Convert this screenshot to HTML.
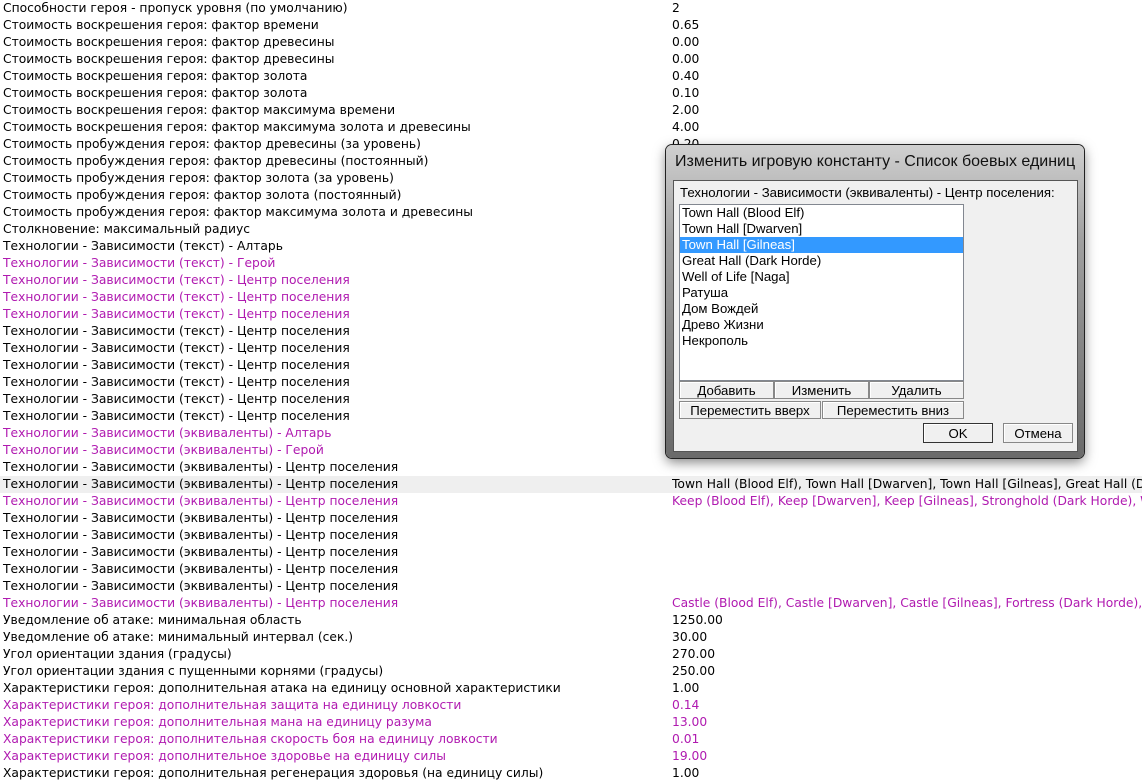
<!DOCTYPE html>
<html><head><meta charset="utf-8"><style>
body{margin:0;width:1142px;height:770px;overflow:hidden;background:#fff;font-family:Tahoma,"DejaVu Sans","Liberation Sans",sans-serif;font-size:12.3px;position:relative}
.r{position:absolute;left:0;width:1142px;height:17px;line-height:17px;white-space:nowrap;color:#000}
.r span{position:absolute;left:3px}
.r b{font-weight:normal;position:absolute;left:672px;width:470px;overflow:hidden;text-overflow:clip}
.p{color:#b01ab0}
.hl{background:#efefef}
#dlg{position:absolute;left:666px;top:145px;width:418px;height:313px;border-radius:6px;background:linear-gradient(#d0d0d0,#a0a0a0 30%,#6a6a6a);box-shadow:0 0 0 1px #222,0 4px 12px rgba(0,0,0,.5);font-family:"Liberation Sans","DejaVu Sans",sans-serif}
#dlg .t{position:absolute;left:9px;top:8px;font-size:16px;color:#111}
#in{position:absolute;left:7px;top:35px;width:403px;height:270px;background:#f0f0f0;border:1px solid #555}
.lab{position:absolute;left:6px;top:4px;font-size:13.2px;white-space:nowrap;width:398px;overflow:hidden}
#lb{position:absolute;left:5px;top:23px;width:283px;height:175px;background:#fff;border:1px solid #828790}
#lb div{height:16px;line-height:16px;padding-left:2px;font-size:13.2px}
#lb .s{background:#3399ff;color:#fff}
.btn{position:absolute;height:18px;line-height:18px;text-align:center;background:#f0f0f0;border:1px solid #888;box-shadow:inset 1px 1px #fff;font-size:13.2px;box-sizing:border-box}
</style></head><body>
<div class="r" style="top:0"><span>Способности героя - пропуск уровня (по умолчанию)</span><b>2</b></div>
<div class="r" style="top:17px"><span>Стоимость воскрешения героя: фактор времени</span><b>0.65</b></div>
<div class="r" style="top:34px"><span>Стоимость воскрешения героя: фактор древесины</span><b>0.00</b></div>
<div class="r" style="top:51px"><span>Стоимость воскрешения героя: фактор древесины</span><b>0.00</b></div>
<div class="r" style="top:68px"><span>Стоимость воскрешения героя: фактор золота</span><b>0.40</b></div>
<div class="r" style="top:85px"><span>Стоимость воскрешения героя: фактор золота</span><b>0.10</b></div>
<div class="r" style="top:102px"><span>Стоимость воскрешения героя: фактор максимума времени</span><b>2.00</b></div>
<div class="r" style="top:119px"><span>Стоимость воскрешения героя: фактор максимума золота и древесины</span><b>4.00</b></div>
<div class="r" style="top:136px"><span>Стоимость пробуждения героя: фактор древесины (за уровень)</span><b>0.20</b></div>
<div class="r" style="top:153px"><span>Стоимость пробуждения героя: фактор древесины (постоянный)</span></div>
<div class="r" style="top:170px"><span>Стоимость пробуждения героя: фактор золота (за уровень)</span></div>
<div class="r" style="top:187px"><span>Стоимость пробуждения героя: фактор золота (постоянный)</span></div>
<div class="r" style="top:204px"><span>Стоимость пробуждения героя: фактор максимума золота и древесины</span></div>
<div class="r" style="top:221px"><span>Столкновение: максимальный радиус</span></div>
<div class="r" style="top:238px"><span>Технологии - Зависимости (текст) - Алтарь</span></div>
<div class="r p" style="top:255px"><span>Технологии - Зависимости (текст) - Герой</span></div>
<div class="r p" style="top:272px"><span>Технологии - Зависимости (текст) - Центр поселения</span></div>
<div class="r p" style="top:289px"><span>Технологии - Зависимости (текст) - Центр поселения</span></div>
<div class="r p" style="top:306px"><span>Технологии - Зависимости (текст) - Центр поселения</span></div>
<div class="r" style="top:323px"><span>Технологии - Зависимости (текст) - Центр поселения</span></div>
<div class="r" style="top:340px"><span>Технологии - Зависимости (текст) - Центр поселения</span></div>
<div class="r" style="top:357px"><span>Технологии - Зависимости (текст) - Центр поселения</span></div>
<div class="r" style="top:374px"><span>Технологии - Зависимости (текст) - Центр поселения</span></div>
<div class="r" style="top:391px"><span>Технологии - Зависимости (текст) - Центр поселения</span></div>
<div class="r" style="top:408px"><span>Технологии - Зависимости (текст) - Центр поселения</span></div>
<div class="r p" style="top:425px"><span>Технологии - Зависимости (эквиваленты) - Алтарь</span><b>Altar (Blood Elf), Altar [Dwarven], Altar [Gilneas]..</b></div>
<div class="r p" style="top:442px"><span>Технологии - Зависимости (эквиваленты) - Герой</span><b>[Dwarven] [Naga], Hunter [Gilneas] [Naga], Weaver F...</b></div>
<div class="r" style="top:459px"><span>Технологии - Зависимости (эквиваленты) - Центр поселения</span></div>
<div class="r hl" style="top:476px"><span>Технологии - Зависимости (эквиваленты) - Центр поселения</span><b>Town Hall (Blood Elf), Town Hall [Dwarven], Town Hall [Gilneas], Great Hall (D...</b></div>
<div class="r p" style="top:493px"><span>Технологии - Зависимости (эквиваленты) - Центр поселения</span><b>Keep (Blood Elf), Keep [Dwarven], Keep [Gilneas], Stronghold (Dark Horde), W...</b></div>
<div class="r" style="top:510px"><span>Технологии - Зависимости (эквиваленты) - Центр поселения</span></div>
<div class="r" style="top:527px"><span>Технологии - Зависимости (эквиваленты) - Центр поселения</span></div>
<div class="r" style="top:544px"><span>Технологии - Зависимости (эквиваленты) - Центр поселения</span></div>
<div class="r" style="top:561px"><span>Технологии - Зависимости (эквиваленты) - Центр поселения</span></div>
<div class="r" style="top:578px"><span>Технологии - Зависимости (эквиваленты) - Центр поселения</span></div>
<div class="r p" style="top:595px"><span>Технологии - Зависимости (эквиваленты) - Центр поселения</span><b>Castle (Blood Elf), Castle [Dwarven], Castle [Gilneas], Fortress (Dark Horde), T...</b></div>
<div class="r" style="top:612px"><span>Уведомление об атаке: минимальная область</span><b>1250.00</b></div>
<div class="r" style="top:629px"><span>Уведомление об атаке: минимальный интервал (сек.)</span><b>30.00</b></div>
<div class="r" style="top:646px"><span>Угол ориентации здания (градусы)</span><b>270.00</b></div>
<div class="r" style="top:663px"><span>Угол ориентации здания с пущенными корнями (градусы)</span><b>250.00</b></div>
<div class="r" style="top:680px"><span>Характеристики героя: дополнительная атака на единицу основной характеристики</span><b>1.00</b></div>
<div class="r p" style="top:697px"><span>Характеристики героя: дополнительная защита на единицу ловкости</span><b>0.14</b></div>
<div class="r p" style="top:714px"><span>Характеристики героя: дополнительная мана на единицу разума</span><b>13.00</b></div>
<div class="r p" style="top:731px"><span>Характеристики героя: дополнительная скорость боя на единицу ловкости</span><b>0.01</b></div>
<div class="r p" style="top:748px"><span>Характеристики героя: дополнительное здоровье на единицу силы</span><b>19.00</b></div>
<div class="r" style="top:765px"><span>Характеристики героя: дополнительная регенерация здоровья (на единицу силы)</span><b>1.00</b></div>

<div id="dlg">
<div class="t">Изменить игровую константу - Список боевых единиц</div>
<div id="in">
<div class="lab">Технологии - Зависимости (эквиваленты) - Центр поселения:</div>
<div id="lb">
<div>Town Hall (Blood Elf)</div><div>Town Hall [Dwarven]</div><div class="s">Town Hall [Gilneas]</div><div>Great Hall (Dark Horde)</div><div>Well of Life [Naga]</div><div>Ратуша</div><div>Дом Вождей</div><div>Древо Жизни</div><div>Некрополь</div>
</div>
<div class="btn" style="left:5px;top:200px;width:95px">Добавить</div>
<div class="btn" style="left:100px;top:200px;width:95px">Изменить</div>
<div class="btn" style="left:195px;top:200px;width:95px">Удалить</div>
<div class="btn" style="left:5px;top:220px;width:142px">Переместить вверх</div>
<div class="btn" style="left:148px;top:220px;width:142px">Переместить вниз</div>
<div class="btn" style="left:249px;top:242px;width:70px;height:20px;line-height:20px;border-color:#333">OK</div>
<div class="btn" style="left:329px;top:242px;width:70px;height:20px;line-height:20px">Отмена</div>
</div>
</div>
</body></html>
